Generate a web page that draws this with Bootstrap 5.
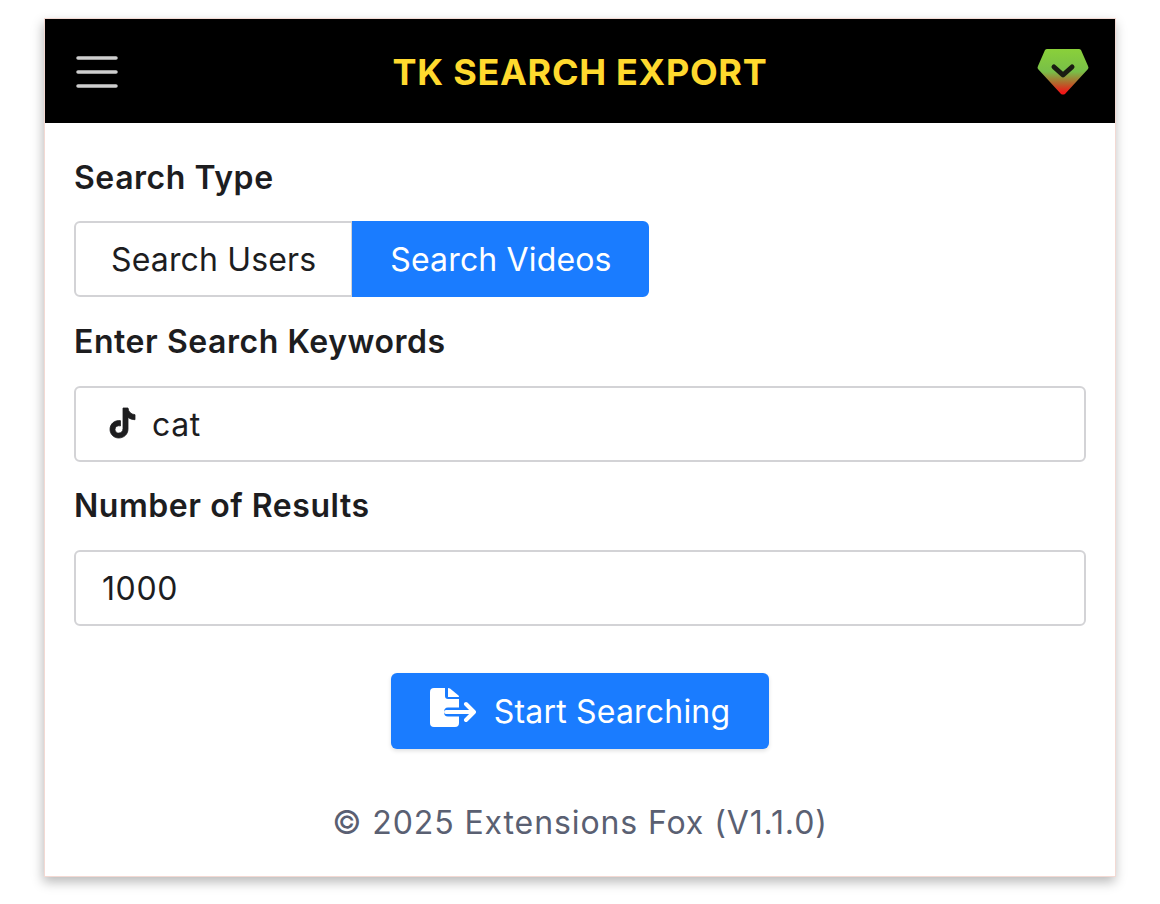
<!DOCTYPE html>
<html lang="en">
<head>
    <meta charset="UTF-8">
    <meta name="viewport" content="width=device-width, initial-scale=1">
    <title>TK Search Export</title>
    <link href="https://cdn.jsdelivr.net/npm/bootstrap@5.3.0/dist/css/bootstrap.min.css" rel="stylesheet">
    <style>
        html, body { min-height: 100%; }
        body { background: #fff; font-family: Inter, "Liberation Sans", sans-serif; color: #1d1d1f; padding-top: 18px; padding-bottom: 27px; }
        .popup-panel { margin: 0 44px; height: 859px; border: 1px solid #f3d9d3; box-shadow: -1px 5px 11px rgba(0,0,0,.28); background: #fff; }
        .popup-header { height: 104px; background: #000; padding: 2px 26px 0 30px; }
        .popup-title { font-size: 36px; font-weight: 700; color: #ffd92e; letter-spacing: .7px; margin: 0 0 0 4px; padding-top: 2px; }
        .menu-btn { width: 44px; padding: 0; border: 0; background: none; line-height: 0; }
        .popup-body { padding: 35px 29px 0; }
        .field-label { display: block; font-size: 32px; font-weight: 600; letter-spacing: .55px; line-height: 40px; margin-bottom: 24px; }
        .type-label { margin-bottom: 23px; }
        .type-group { margin-bottom: 25px; }
        .type-group .btn { font-size: 32px; letter-spacing: .15px; height: 76px; line-height: 1; padding-top: 2px; padding-bottom: 0; display: flex; align-items: center; border-radius: 6px; }
        .type-group .type-off { background: #fff; border: 2px solid #d3d3d6; color: #1d1d1f; padding-left: 35px; padding-right: 35px; }
        .type-group .type-on { background: #1a7cff; border: 2px solid #1a7cff; color: #fff; padding-left: 36px; padding-right: 35px; }
        .field-wrap { margin-bottom: 24px; }
        .field-input { height: 76px; font-size: 32px; letter-spacing: .6px; color: #1d1d1f; border: 2px solid #d3d3d6; border-radius: 6px; padding: 0 26px; }
        .field-icon { position: absolute; left: 34px; top: 20px; }
        .has-icon { padding-left: 76px; }
        .start-btn { width: 378px; height: 76px; padding: 2px 0 0; gap: 18px; font-size: 32px; letter-spacing: .2px; background: #1a7cff; border: 0; border-radius: 6px; margin-top: 23px; box-shadow: 0 2px 4px rgba(0,0,0,.12); }
        .start-icon { margin-bottom: 8px; }
        .popup-foot { font-size: 32px; color: #5a6072; letter-spacing: .9px; margin-top: 50px; }
    </style>
</head>
<body>

    <div class="popup-panel">
        <div class="popup-header d-flex align-items-center justify-content-between">
            <button class="menu-btn" type="button" aria-label="Menu">
                <svg width="44" height="36" viewBox="0 0 44 36"><path d="M3 4h38M3 18h38M3 32h38" stroke="#cfcfcf" stroke-width="3.500" stroke-linecap="round" fill="none"/></svg>
            </button>
            <h1 class="popup-title">TK SEARCH EXPORT</h1>
            <svg width="52" height="46" viewBox="0 0 52 46">
                <defs>
                    <linearGradient id="gem" x1="0" y1="0" x2="0" y2="1">
                        <stop offset="0" stop-color="#8ad03a"/>
                        <stop offset=".5" stop-color="#78bf48"/>
                        <stop offset=".75" stop-color="#b2672c"/>
                        <stop offset=".95" stop-color="#f01818"/>
                    </linearGradient>
                </defs>
                <path d="M10 0h32q1 0 2 1l7 16q1 2 0 3L28 45q-2 1-4 0L1 20q-1-1 0-3L8 1q1-1 2-1z" fill="url(#gem)"/>
                <path d="M17 18l9 8 9-8" stroke="#1a1c12" stroke-width="5" stroke-linecap="round" stroke-linejoin="round" fill="none"/>
            </svg>
        </div>

        <div class="popup-body">
            <label class="field-label type-label">Search Type</label>
            <div class="btn-group type-group" role="group">
                <button type="button" class="btn type-off">Search Users</button>
                <button type="button" class="btn type-on">Search Videos</button>
            </div>

            <label class="field-label" for="keywords">Enter Search Keywords</label>
            <div class="field-wrap position-relative">
                <svg class="field-icon" width="30" height="34" viewBox="0 0 30 34"><path fill="#1d1d1f" stroke="#1d1d1f" stroke-width=".8" d="M15 2h5c.4 3.800 3 6.300 7 6.700v5c-2.600-.1-5-.9-7-2.300v11.600c0 5.500-4.300 9-9.300 9-5 0-8.700-3.900-8.700-8.700 0-5.400 4.700-9.500 10.500-8.600v5.200c-3-.8-5.500 1-5.500 3.500 0 2.200 1.700 3.700 3.700 3.700 2.200 0 4.300-1.500 4.300-4.500z"/></svg>
                <input id="keywords" class="form-control field-input has-icon" type="text" value="cat">
            </div>

            <label class="field-label" for="results">Number of Results</label>
            <div class="field-wrap">
                <input id="results" class="form-control field-input" type="text" value="1000">
            </div>

            <div class="text-center">
                <button type="button" class="btn btn-primary start-btn d-inline-flex align-items-center justify-content-center">
                    <svg class="start-icon" width="46" height="40" viewBox="0 0 46 40">
                        <path fill="#fff" d="M4 0h11v8q0 3 3 3h11v8.500H18q-4 0-4 4.500t4 4.500h11V35q0 4-4 4H4q-4 0-4-4V4q0-4 4-4z"/>
                        <path fill="#fff" d="M18 0q1 0 2 .5l8.500 7q.5.500.5 1.500H18z"/>
                        <path d="M16 24h27M36 16l8 8-8 8" stroke="#fff" stroke-width="4" stroke-linecap="round" stroke-linejoin="round" fill="none"/>
                    </svg>
                    Start Searching
                </button>
            </div>

            <div class="popup-foot text-center">© 2025 Extensions Fox (V1.1.0)</div>
        </div>
    </div>

    <script src="https://cdn.jsdelivr.net/npm/bootstrap@5.3.0/dist/js/bootstrap.bundle.min.js"></script>

</body>
</html>
